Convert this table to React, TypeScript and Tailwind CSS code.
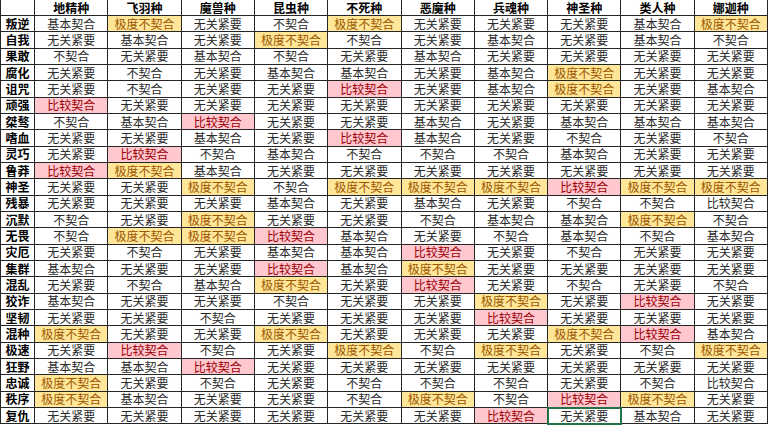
import React from "react";

type Level = "A" | "B" | "N" | "X" | "P" | "W";

const COLUMNS = [
  "地精种",
  "飞羽种",
  "魔兽种",
  "昆虫种",
  "不死种",
  "恶魔种",
  "兵魂种",
  "神圣种",
  "类人种",
  "娜迦种",
];

// A 无关紧要, B 基本契合, N 不契合, X 极度不契合 (yellow), P 比较契合 (pink), W 比较契合 (plain)
const ROWS: [string, string][] = [
  ["叛逆", "BXANXAAABX"],
  ["自我", "ABAXNABABN"],
  ["果敢", "NABNABAAAA"],
  ["腐化", "ANABBABXAA"],
  ["诅咒", "ANAAPABXAB"],
  ["顽强", "PAAAAAAAAA"],
  ["桀骜", "NBPAABABBB"],
  ["嗜血", "AABAPBANAN"],
  ["灵巧", "APNBNNNBAA"],
  ["鲁莽", "PXBAAAAAAA"],
  ["神圣", "AAXNXXXPXX"],
  ["残暴", "AAABABANNW"],
  ["沉默", "NAXAANBBXN"],
  ["无畏", "NXXPBANBNB"],
  ["灾厄", "ANABBPANAA"],
  ["集群", "BAAPBXAAAA"],
  ["混乱", "ANBXAPANAN"],
  ["狡诈", "BAANAAXAPA"],
  ["坚韧", "AANAAAPAAA"],
  ["混种", "XAAXAAAXPB"],
  ["极速", "APNAXNXANX"],
  ["狂野", "BBPAAAAAAA"],
  ["忠诚", "XANANNNANW"],
  ["秩序", "XBAANXNPXA"],
  ["复仇", "AAAAAAPABA"],
];

const LABELS: Record<Level, string> = {
  A: "无关紧要",
  B: "基本契合",
  N: "不契合",
  X: "极度不契合",
  P: "比较契合",
  W: "比较契合",
};

const TONES: Record<Level, string> = {
  A: "text-[#2b2b2b]",
  B: "text-[#2b2b2b]",
  N: "text-[#2b2b2b]",
  W: "text-[#2b2b2b]",
  X: "bg-[#ffe699] text-[#9c5700]",
  P: "bg-[#ffc7ce] text-[#9c0006]",
};

const cell =
  "flex items-center justify-center whitespace-nowrap border-r border-b border-[#262626]";

export default function App() {
  return (
    <div className="h-[425px] w-[768px] overflow-hidden bg-white font-['Noto_Sans_CJK_SC',sans-serif] text-[12px] leading-none">
      <div className="grid grid-cols-[35px_repeat(10,minmax(0,1fr))] grid-rows-[16px_repeat(25,16.33px)]">
        <div className={`${cell} border-l`} />
        {COLUMNS.map((name) => (
          <div key={name} className={`${cell} font-bold text-black`}>
            {name}
          </div>
        ))}
        {ROWS.map(([trait, values]) => (
          <React.Fragment key={trait}>
            <div className={`${cell} border-l font-bold text-black`}>
              {trait}
            </div>
            {values.split("").map((v, i) => {
              const level = v as Level;
              const selected = trait === "复仇" && i === 7;
              return (
                <div
                  key={i}
                  className={`${cell} ${TONES[level]} ${
                    selected
                      ? "relative z-10 outline-2 -outline-offset-1 outline-[#217346]"
                      : ""
                  }`}
                >
                  {LABELS[level]}
                </div>
              );
            })}
          </React.Fragment>
        ))}
      </div>
    </div>
  );
}
